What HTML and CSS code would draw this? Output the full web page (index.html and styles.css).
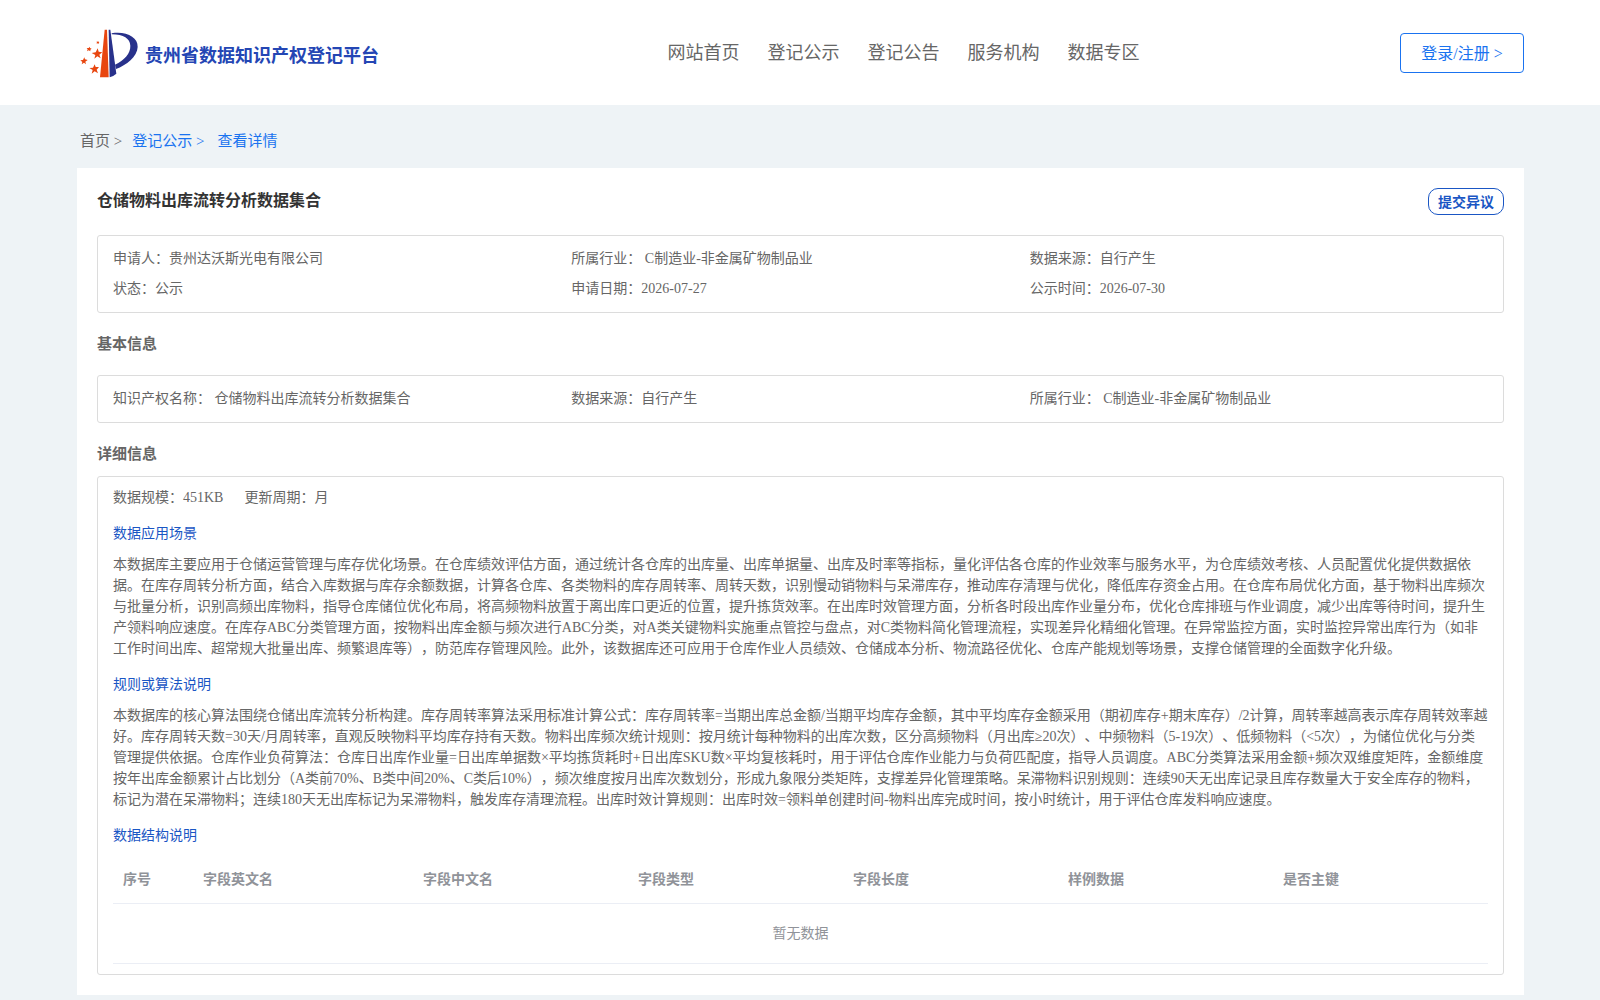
FILE: index.html
```html
<!DOCTYPE html>
<html lang="zh-CN">
<head>
<meta charset="utf-8">
<meta name="viewport" content="width=device-width, initial-scale=1">
<title>贵州省数据知识产权登记平台</title>
<link rel="stylesheet" href="styles.css">
</head>
<body>
<header class="header">
  <a class="brand" href="#">
    <svg class="brand-logo" viewBox="3 0 198 180" aria-hidden="true">
      <g fill="#e84610">
        <path d="M86 20 L93 20 L98 163 L72 163 Z"/>
        <path d="M65 76 L68 86 L79 88 L70 95 L74 106 L64 100 L55 107 L58 96 L47 90 L59 88 Z"/>
        <path d="M56 124 L59 132 L69 132 L62 140 L66 151 L56 145 L47 152 L50 141 L40 135 L51 134 Z"/>
        <path d="M25 103 L27 109 L35 111 L28 116 L30 124 L24 119 L17 124 L19 117 L13 112 L21 111 Z"/>
        <path d="M41 71 L42 75 L47 77 L43 80 L43 85 L38 82 L33 85 L35 79 L32 75 L38 75 Z"/>
        <path d="M66 53 L67 56 L70 57 L68 60 L68 63 L65 61 L62 63 L63 59 L61 56 L65 56 Z"/>
      </g>
      <g fill="#28318b">
        <path d="M98 20 L103 20 L121 152 Q112 160 101 163 Z"/>
        <path d="M107 31 C150 24 186 42 185 72 C184 101 151 127 120 138 L117 125 C145 111 164 91 163 68 C162 47 143 34 107 34 Z"/>
      </g>
    </svg>
    <span class="brand-name">贵州省数据知识产权登记平台</span>
  </a>
  <nav class="nav">
    <a href="#">网站首页</a>
    <a href="#">登记公示</a>
    <a href="#">登记公告</a>
    <a href="#">服务机构</a>
    <a href="#">数据专区</a>
  </nav>
  <button class="login" type="button">登录/注册 &gt;</button>
</header>
<main class="page">
  <nav class="crumbs" aria-label="面包屑">
    <a class="crumb-home" href="#">首页 &gt;</a>
    <a href="#">登记公示 &gt;</a>
    <a class="crumb-current" href="#">查看详情</a>
  </nav>
  <article class="card">
    <div class="card-head">
      <h1 class="title">仓储物料出库流转分析数据集合</h1>
      <button class="objection" type="button">提交异议</button>
    </div>
    <div class="box grid">
      <div>申请人：贵州达沃斯光电有限公司</div>
      <div>所属行业： C制造业-非金属矿物制品业</div>
      <div>数据来源：自行产生</div>
      <div>状态：公示</div>
      <div>申请日期：2026-07-27</div>
      <div>公示时间：2026-07-30</div>
    </div>
    <h2 class="section section-basic">基本信息</h2>
    <div class="box grid">
      <div>知识产权名称： 仓储物料出库流转分析数据集合</div>
      <div>数据来源：自行产生</div>
      <div>所属行业： C制造业-非金属矿物制品业</div>
    </div>
    <h2 class="section section-detail">详细信息</h2>
    <div class="box detail">
      <div class="meta"><span>数据规模：451KB</span><span>更新周期：月</span></div>
      <h3 class="sub sub-first">数据应用场景</h3>
      <p class="text">本数据库主要应用于仓储运营管理与库存优化场景。在仓库绩效评估方面，通过统计各仓库的出库量、出库单据量、出库及时率等指标，量化评估各仓库的作业效率与服务水平，为仓库绩效考核、人员配置优化提供数据依据。在库存周转分析方面，结合入库数据与库存余额数据，计算各仓库、各类物料的库存周转率、周转天数，识别慢动销物料与呆滞库存，推动库存清理与优化，降低库存资金占用。在仓库布局优化方面，基于物料出库频次与批量分析，识别高频出库物料，指导仓库储位优化布局，将高频物料放置于离出库口更近的位置，提升拣货效率。在出库时效管理方面，分析各时段出库作业量分布，优化仓库排班与作业调度，减少出库等待时间，提升生产领料响应速度。在库存ABC分类管理方面，按物料出库金额与频次进行ABC分类，对A类关键物料实施重点管控与盘点，对C类物料简化管理流程，实现差异化精细化管理。在异常监控方面，实时监控异常出库行为（如非工作时间出库、超常规大批量出库、频繁退库等），防范库存管理风险。此外，该数据库还可应用于仓库作业人员绩效、仓储成本分析、物流路径优化、仓库产能规划等场景，支撑仓储管理的全面数字化升级。</p>
      <h3 class="sub">规则或算法说明</h3>
      <p class="text">本数据库的核心算法围绕仓储出库流转分析构建。库存周转率算法采用标准计算公式：库存周转率=当期出库总金额/当期平均库存金额，其中平均库存金额采用（期初库存+期末库存）/2计算，周转率越高表示库存周转效率越好。库存周转天数=30天/月周转率，直观反映物料平均库存持有天数。物料出库频次统计规则：按月统计每种物料的出库次数，区分高频物料（月出库≥20次）、中频物料（5-19次）、低频物料（&lt;5次），为储位优化与分类管理提供依据。仓库作业负荷算法：仓库日出库作业量=日出库单据数×平均拣货耗时+日出库SKU数×平均复核耗时，用于评估仓库作业能力与负荷匹配度，指导人员调度。ABC分类算法采用金额+频次双维度矩阵，金额维度按年出库金额累计占比划分（A类前70%、B类中间20%、C类后10%），频次维度按月出库次数划分，形成九象限分类矩阵，支撑差异化管理策略。呆滞物料识别规则：连续90天无出库记录且库存数量大于安全库存的物料，标记为潜在呆滞物料；连续180天无出库标记为呆滞物料，触发库存清理流程。出库时效计算规则：出库时效=领料单创建时间-物料出库完成时间，按小时统计，用于评估仓库发料响应速度。</p>
      <h3 class="sub">数据结构说明</h3>
      <table class="table">
        <colgroup><col class="col-index"><col class="col-name"><col><col><col><col><col></colgroup>
        <thead>
          <tr><th>序号</th><th>字段英文名</th><th>字段中文名</th><th>字段类型</th><th>字段长度</th><th>样例数据</th><th>是否主键</th></tr>
        </thead>
        <tbody>
          <tr><td class="empty" colspan="7">暂无数据</td></tr>
        </tbody>
      </table>
    </div>
  </article>
</main>
</body>
</html>
```

FILE: styles.css
```css
* {
  box-sizing: border-box;
}

body {
  margin: 0;
  background: #eef3f6;
  color: #666;
  font-family: "Liberation Serif", "Noto Sans CJK SC", serif;
  font-size: 14px;
  line-height: 21px;
  text-spacing-trim: space-all;
}

a {
  color: inherit;
  text-decoration: none;
}

button {
  background: #fff;
  font-family: inherit;
  padding: 0 0 2px;
  cursor: pointer;
}

h1, h2, h3, p {
  margin: 0;
}

.header {
  display: flex;
  align-items: center;
  justify-content: space-between;
  height: 105px;
  padding: 0 76px 0 77px;
  background: #fff;
}

.brand {
  display: flex;
  align-items: center;
  gap: 2px;
  color: #2446b4;
  font-size: 18px;
  font-weight: bold;
}

.brand-logo {
  width: 66px;
  height: 60px;
}

.brand-name {
  padding-top: 7px;
}

.nav {
  display: flex;
  gap: 28px;
  margin-right: -28px;
  padding-top: 2px;
  font-size: 18px;
}

.login {
  width: 124px;
  height: 40px;
  border: 1px solid #1a73f0;
  border-radius: 4px;
  color: #1a73f0;
  font-size: 16px;
}

.page {
  padding: 0 76px 5px 77px;
}

.crumbs {
  display: flex;
  height: 63px;
  padding: 9px 3px 0;
  align-items: center;
  gap: 10px;
  color: #1a73f0;
  font-size: 15px;
}

.crumb-home {
  color: #666;
}

.crumb-current {
  margin-left: 3px;
}

.card {
  padding: 20px;
  background: #fff;
}

.card-head {
  display: flex;
  align-items: flex-start;
  justify-content: space-between;
  height: 47px;
}

.title {
  color: #333;
  font-size: 16px;
  line-height: 26px;
}

.objection {
  width: 76px;
  height: 27px;
  border: 1px solid #1a56c4;
  border-radius: 10px;
  color: #1a56c4;
  font-size: 14px;
  font-weight: bold;
}

.box {
  padding: 8px 15px;
  border: 1px solid #dcdcdc;
  border-radius: 3px;
}

.grid {
  display: grid;
  grid-template-columns: repeat(3, 1fr);
  line-height: 30px;
}

.section {
  font-size: 15px;
  line-height: 22px;
}

.section-basic {
  padding: 20px 0;
}

.section-detail {
  padding: 20px 0 11px;
}

.detail {
  padding-bottom: 10px;
}

.meta {
  display: flex;
  gap: 21px;
  line-height: 26px;
}

.sub {
  padding: 15px 0 10px;
  color: #1a56c4;
  font-size: 14px;
  font-weight: normal;
}

.sub-first {
  padding-top: 12px;
}

.table {
  width: 100%;
  border-collapse: collapse;
  table-layout: fixed;
  color: #909399;
}

.col-index {
  width: 80px;
}

.col-name {
  width: 220px;
}

.table th {
  padding: 12px 10px;
  border-bottom: 1px solid #ebeef5;
  line-height: 23px;
  text-align: left;
}

.empty {
  height: 60px;
  padding: 0;
  border-bottom: 1px solid #ebeef5;
  text-align: center;
}
```
